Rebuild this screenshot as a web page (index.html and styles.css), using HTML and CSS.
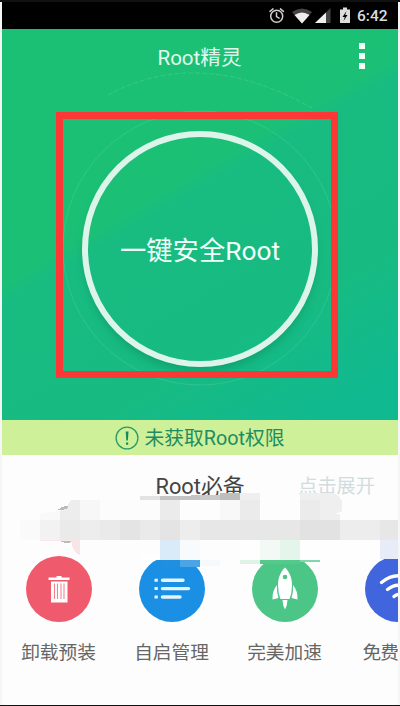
FILE: index.html
```html
<!DOCTYPE html>
<html lang="zh-CN">
<head>
<meta charset="utf-8">
<title>Root精灵</title>
<link rel="stylesheet" href="styles.css">
</head>
<body>
<main class="phone">
  <div class="status">
    <svg width="78" height="22" viewBox="274 4 78 22">
      <g fill="none" stroke="#ccc" stroke-width="1.5" stroke-linecap="round">
        <circle cx="276.7" cy="15.3" r="6"/>
        <path d="M276.5 11.8v3.8l2.6 1.6M270 10.4l3-2.5M283.4 10.4l-3-2.5"/>
      </g>
      <path d="M292 11Q302 4 312 11L302 22.5Z" fill="#444"/>
      <path d="M294.5 14Q302 9 309.500 14L302 22.500Z" fill="#eee"/>
      <path d="M330.500 7V22H315Z" fill="#444"/>
      <path d="M326 11.500V22H315Z" fill="#eee"/>
      <path d="M340 8.500h3V6.500h4v2h3V22h-10Z" fill="#ddd"/>
      <path d="M346.500 10l-4 6h2.300l-1.300 4 4-6h-2.300Z" fill="#000"/>
    </svg>
    <span class="clock">6:42</span>
  </div>
  <section class="hero">
    <svg class="rings" width="396" height="391" viewBox="2 29 396 391" fill="none">
      <circle cx="200" cy="248" r="137" stroke="#fff" stroke-opacity=".1" stroke-width="1"/>
      <path d="M108 95Q200 45 312 108" stroke="#fff" stroke-opacity=".12" stroke-dasharray="5 2"/>
    </svg>
    <header class="bar">
      <h1>Root精灵</h1>
      <div class="more"><i></i><i></i><i></i></div>
    </header>
    <button class="root-btn">一键安全Root</button>
    <div class="highlight"></div>
  </section>
  <div class="notice">
    <svg width="24" height="24" viewBox="0 0 24 24"><circle cx="12" cy="12" r="10.900" fill="none" stroke="#2b9a68" stroke-width="1.300"/><path d="M10.700 5.500h2.800l-.6 9h-1.600ZM11 16.500h2.200v2.200H11Z" fill="#168a5c"/></svg>
    <span>未获取Root权限</span>
  </div>
  <section class="tools">
    <div class="tools-head"><h2>Root必备</h2><span class="expand">点击展开</span></div>
    <div class="grid">
      <div class="tool">
        <svg class="disc red" viewBox="0 0 66 66"><g fill="#fff"><path d="M22.500 21.500h8v-1.500h5v1.500h8v2.500h-21ZM25 25.500h16.500V46.500H25Z"/><path d="M28.500 27.500V43M31.500 27.500V43M35 27.500V43M38 27.500V43" stroke="#f3848f" stroke-width="1.100"/></g></svg>
        <span>卸载预装</span>
      </div>
      <div class="tool">
        <svg class="disc blue" viewBox="0 0 66 66"><path d="M23.500 24.300h20.500M23.500 32.600h26M23.500 41h17.500" stroke="#e4f3fd" stroke-width="3.400" stroke-linecap="round"/><path d="M15.500 24.300h3.300M15.500 32.600h3.300M15.500 41h3.300" stroke="#e4f3fd" stroke-width="3"/></svg>
        <span>自启管理</span>
      </div>
      <div class="tool">
        <svg class="disc green" viewBox="0 0 66 66"><g fill="#fff"><path d="M33 11.500C38.500 17 40 23 40 29.500Q40 37 37.500 43h-9Q26 37 26 29.500C26 23 27.500 17 33 11.500Z"/><path d="M25 29q-5 6-4.500 14.500l6-1.500Q24.500 36 25 29ZM41 29q5 6 4.500 14.500l-6-1.500Q41.500 36 41 29ZM30.500 44h5q0 5-2.500 9.500Q30.500 49 30.500 44Z"/></g><circle cx="33" cy="21" r="2.300" fill="#4bc686"/></svg>
        <span>完美加速</span>
      </div>
      <div class="tool">
        <svg class="disc indigo" viewBox="0 0 66 66" fill="none" stroke="#fff" stroke-width="3.300" stroke-linecap="round"><path d="M16.500 26.500Q33 13 49.500 26.500M22.500 33.500Q33 25 43.500 33.500M29 40.500Q33 36.500 37 40.500"/></svg>
        <span class="cut">免费</span>
      </div>
    </div>
  </section>
  <svg class="mosaic" width="396" height="80" viewBox="2 490 396 80" shape-rendering="crispEdges">
    <path d="M60 543v-32q0-4 6-7h20v39Z" fill="#fff"/>
    <path d="M57 511Q61 506 68 506v4H57Z" fill="#bbb"/>
    <path d="M40 520v-7l20-2v9Z" fill="#f9f9f9"/>
    <path d="M60 520v-9l8-3q0-8 5-8h7v20Z" fill="#ededed"/>
    <path d="M80 500h20v20H80Z" fill="#f7f7f7"/>
    <path d="M100 500h60v20h-60Z" fill="#fcfcfc"/>
    <path d="M140 496h20v4h-20Z" fill="#e3e3e3"/>
    <path d="M160 496h31v-1h9v5h-40Z" fill="#c4c4c4"/>
    <path d="M200 495h20v5h-20Z" fill="#cacaca"/>
    <path d="M220 493h20v7h-20Z" fill="#bebebe"/>
    <path d="M160 500h20v20h-20ZM300 500h20v20h-20ZM240 500h20v20h-20Z" fill="#ebebeb"/>
    <path d="M180 500h40v20h-40ZM260 500h40v20h-40Z" fill="#fdfdfd"/>
    <path d="M220 500h20v20h-20Z" fill="#f8f8f8"/>
    <path d="M240 493h20v7h-20ZM300 493h30q8 0 12 8v10q-4 3-12 3h10v6h-20v-20h-20Z" fill="#efefef"/>
    <path d="M20 520h20v20H20Z" fill="#fafafa"/>
    <path d="M40 520h20v20H40Z" fill="#f2f2f2"/>
    <path d="M60 520h20v20H60ZM100 520h20v20h-20ZM140 520h20v20h-20Z" fill="#eaeaea"/>
    <path d="M80 520h20v20H80ZM180 520h20v20h-20ZM340 520h40v20h-40Z" fill="#ededed"/>
    <path d="M120 520h20v20h-20ZM160 520h20v20h-20Z" fill="#e4e4e4"/>
    <path d="M200 520h100v20H200ZM380 520h18v20h-18Z" fill="#e7e7e7"/>
    <path d="M300 520h40v20h-40Z" fill="#e2e2e2"/>
    <path d="M40 540h31v1H40Z" fill="#fae7e9"/>
    <path d="M59 541h13v1q-6 2-13-1Z" fill="#bbb"/>
    <path d="M71 540h9v15q-8-3-9-15Z" fill="#f7e6e8"/>
    <path d="M80 540h80v14H80Z" fill="#fdfdfd"/>
    <path d="M140 554h20v6h-20ZM240 540h140v20H240Z" fill="#fefefe"/>
    <path d="M160 540h20v20h-20Z" fill="#d9eaf8"/>
    <path d="M180 540h20v20h-20Z" fill="#f7fbfe"/>
    <path d="M162 560h18v7h-18Z" fill="#218fe0"/>
    <path d="M180 560h20v7h-20Z" fill="#4ba4e6"/>
    <path d="M200 560h20v6h-20Z" fill="#f4f9fd"/>
    <path d="M260 540h20v20h-20Z" fill="#f3faf6"/>
    <path d="M280 540h20v20h-20Z" fill="#e4f6ec"/>
    <path d="M240 560h20v4h-20Z" fill="#dcf3e6"/>
    <path d="M260 560h40v4h-40Z" fill="#55c98c"/>
    <path d="M300 560h20v2h-20Z" fill="#82d7aa"/>
    <path d="M380 540h18v19h-18Z" fill="#e8ecf9"/>
  </svg>
</main>
</body>
</html>
```
FILE: styles.css
```css
* { box-sizing: border-box; margin: 0; padding: 0; }
body {
  width: 400px;
  height: 706px;
  overflow: hidden;
  background: #f6f6f6;
  font-family: Roboto, "Noto Sans CJK SC", sans-serif;
}
.phone {
  position: relative;
  height: 706px;
  padding: 0 2px;
  border-top: 2px solid #111;
  border-bottom: 1px solid #111;
  overflow: hidden;
}
.status {
  height: 27px;
  background: #000;
  display: flex;
  justify-content: flex-end;
  align-items: center;
  gap: 5px;
  padding-right: 9px;
}
.status svg { overflow: visible; }
.clock { width: 32px; color: #ddd; font-size: 15.5px; line-height: 20px; font-weight: 500; }
.hero {
  position: relative;
  height: 391px;
  background: linear-gradient(150deg, #1bc075 0%, #1bc076 41%, #18bc80 44%, #17bb82 72%, #10b98f 92%, #10b990 100%);
}
.rings { position: absolute; inset: 0; }
.bar {
  position: relative;
  height: 56px;
  display: flex;
  align-items: center;
  justify-content: center;
}
h1 { font-size: 20.6px; font-weight: 400; color: #e2f8ed; line-height: 28px; padding: 1px 1px 0 0; }
.more { position: absolute; right: 33px; top: 14px; display: grid; gap: 4px; }
.more i { width: 6px; height: 6px; background: #f4fff8; }
.root-btn {
  position: relative;
  display: block;
  width: 236px;
  height: 236px;
  margin: 46px auto 0;
  padding-bottom: 2px;
  border: 6px solid #dcf4ea;
  border-radius: 50%;
  background: transparent;
  box-shadow: 0 7px 9px -2px rgba(0, 110, 70, .3);
  color: #f2fff8;
  font: 400 26.3px Roboto, "Noto Sans CJK SC", sans-serif;
  white-space: nowrap;
}
.highlight {
  position: absolute;
  left: 54px;
  top: 83px;
  width: 282px;
  height: 266px;
  border: 7px solid #fc3837;
}
.notice {
  height: 35px;
  background: #cef098;
  color: #218c62;
  font-size: 19.8px;
  line-height: 35px;
  display: flex;
  align-items: center;
  justify-content: center;
  gap: 5px;
}
.notice span { padding-top: 1px; }
.tools { height: 250px; background: #fdfdfd; overflow: hidden; }
.tools-head {
  position: relative;
  height: 62px;
  text-align: center;
}
h2 { font-size: 21.8px; font-weight: 400; color: #444; line-height: 64px; }
.expand { position: absolute; right: 23px; top: 18px; font-size: 19.2px; line-height: 28px; color: #d2dcdc; }
.grid { display: grid; grid-template-columns: repeat(4, 113px); margin-top: 39px; }
.tool { display: flex; flex-direction: column; align-items: center; gap: 17px; }
.tool span { font-size: 18.7px; line-height: 28px; color: #666; white-space: nowrap; }
.tool .cut { width: 70px; letter-spacing: -1px; }
.disc { width: 66px; height: 66px; border-radius: 50%; }
.red { background: #ef5b6c; }
.blue { background: #1a8fe3; }
.green { background: #4bc686; }
.indigo { background: #4065dc; }
.mosaic { position: absolute; left: 2px; top: 488px; }
```
